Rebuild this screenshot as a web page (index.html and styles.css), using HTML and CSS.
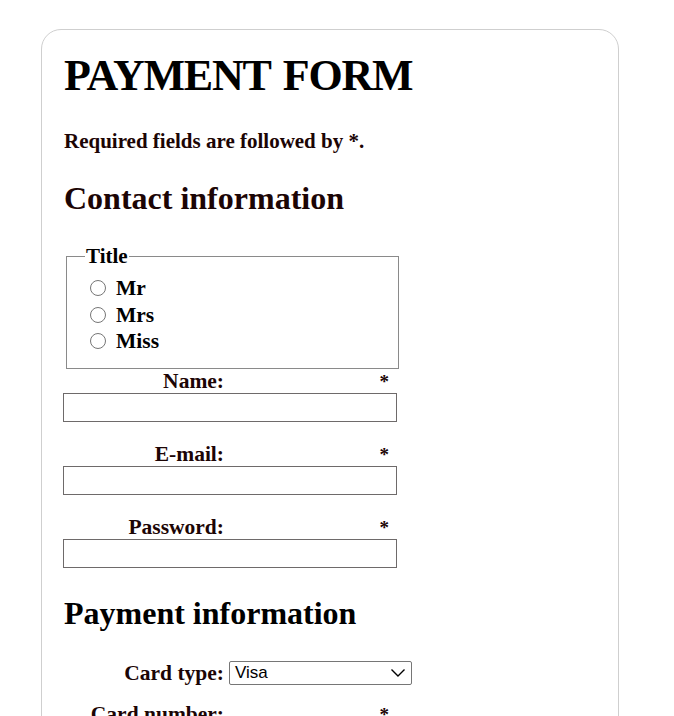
FILE: index.html
```html
<!DOCTYPE html>
<html>
<head>
<meta charset="utf-8">
<link rel="stylesheet" href="styles.css">
</head>
<body>
<form class="card">
  <h1 class="title">PAYMENT FORM</h1>
  <p class="note">Required fields are followed by <strong>*</strong>.</p>
  <h2 class="section section-dark">Contact information</h2>
  <fieldset class="titles">
    <legend>Title</legend>
    <label class="radio"><input type="radio" name="title"><span>Mr</span></label>
    <label class="radio"><input type="radio" name="title"><span>Mrs</span></label>
    <label class="radio"><input type="radio" name="title"><span>Miss</span></label>
  </fieldset>
  <div class="field first">
    <div class="field-head"><span class="lbl">Name:</span><span class="req">*</span></div>
    <input class="text" type="text">
  </div>
  <div class="field">
    <div class="field-head"><span class="lbl">E-mail:</span><span class="req">*</span></div>
    <input class="text" type="email">
  </div>
  <div class="field">
    <div class="field-head"><span class="lbl">Password:</span><span class="req">*</span></div>
    <input class="text" type="password">
  </div>
  <h2 class="section section-pay">Payment information</h2>
  <div class="select-row">
    <span class="lbl">Card type:</span>
    <div class="select"><span>Visa</span>
      <svg width="16" height="10" viewBox="0 0 16 10"><path d="M1.5 1.5 L8 8 L14.5 1.5" fill="none" stroke="#000" stroke-width="1.4"/></svg>
    </div>
  </div>
  <div class="field card-num">
    <div class="field-head"><span class="lbl">Card number:</span><span class="req">*</span></div>
    <input class="text" type="text">
  </div>
</form>
</body>
</html>
```
FILE: styles.css
```css
html, body { margin: 0; padding: 0; background: #fff; }
body {
  font-family: "Liberation Serif", "Times New Roman", serif;
  padding: 29px 0 0 41px;
}
.card {
  width: 532px;
  border: 1px solid #cfcfcf;
  border-radius: 20px;
  padding: 14px 22px 40px 22px;
  height: 800px;
}
.title {
  margin: 0;
  font-size: 44px;
  letter-spacing: -1.2px;
  word-spacing: 3px;
  line-height: 64px;
  color: #000;
}
.note {
  margin: 21px 0 0;
  font-size: 21px;
  font-weight: bold;
  color: #1c0505;
  line-height: 24px;
}
.section {
  margin: 0;
  font-size: 32px;
  line-height: 40px;
  color: #000;
}
.section-dark { color: #1c0505; margin-top: 25px; }
.section-pay { margin-top: 25px; }
.titles {
  margin: 27px 0 0 2px;
  width: 333px;
  box-sizing: border-box;
  border: 1px solid #8a8a8a;
  padding: 8px 0 13px 22px;
  display: flex;
  flex-direction: column;
}
.titles legend {
  font-size: 21px;
  font-weight: bold;
  padding: 0 1px;
  margin-left: -4px;
  line-height: 22px;
}
.radio {
  display: flex;
  align-items: center;
  font-size: 21.5px;
  font-weight: bold;
  line-height: 26.5px;
  color: #000;
}
.radio input {
  margin: 0 10px 0 1px;
  width: 16px;
  height: 16px;
}
.field { margin-top: 20px; width: 334px; }
.field.first { margin-top: 0; }
.field.card-num { margin-top: 16px; }
.field-head {
  display: flex;
  align-items: baseline;
  height: 24px;
  line-height: 24px;
}
.lbl {
  width: 160px;
  text-align: right;
  font-size: 21.5px;
  font-weight: bold;
  color: #1c0505;
}
.req {
  margin-left: auto;
  margin-right: 9px;
  font-size: 19px;
  font-weight: bold;
  color: #1c0505;
}
.text {
  display: block;
  box-sizing: border-box;
  width: 334px;
  height: 29px;
  margin: 0 0 0 -1px;
  border: 1px solid #6e6a6a;
  border-radius: 0;
  padding: 0;
  background: #fff;
}
.select-row {
  display: flex;
  align-items: center;
  margin-top: 28px;
  gap: 5px;
}
.select {
  box-sizing: border-box;
  width: 183px;
  height: 24px;
  border: 1px solid #767676;
  border-radius: 2px;
  display: flex;
  align-items: center;
  justify-content: space-between;
  padding: 0 5px 0 5px;
  font-family: "Liberation Sans", Arial, sans-serif;
  font-size: 17px;
  color: #000;
}
```
